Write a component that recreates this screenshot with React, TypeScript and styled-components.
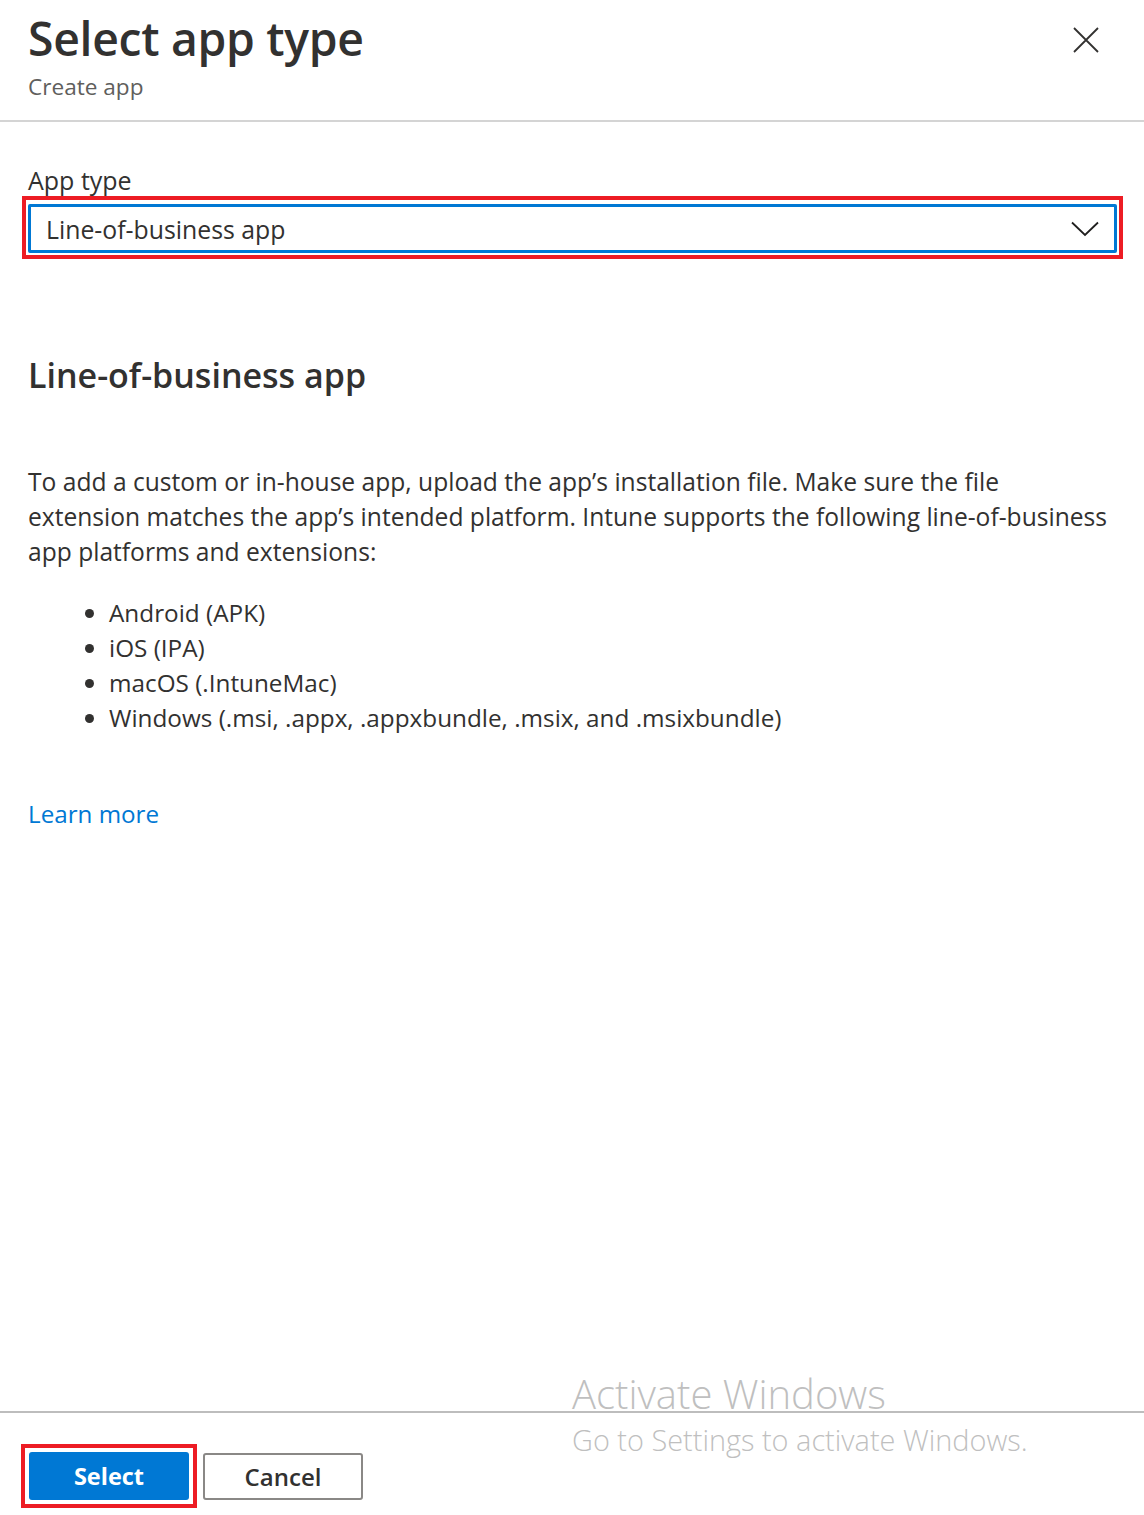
import React from "react";
import styled, { createGlobalStyle } from "styled-components";

const GlobalStyle = createGlobalStyle`
  html, body {
    margin: 0;
    padding: 0;
    background: #ffffff;
  }
  body {
    font-family: "Open Sans", "Noto Sans", Arial, sans-serif;
    color: #323130;
  }
`;

const platforms = [
  "Android (APK)",
  "iOS (IPA)",
  "macOS (.IntuneMac)",
  "Windows (.msi, .appx, .appxbundle, .msix, and .msixbundle)",
];

export default function App() {
  return (
    <>
      <GlobalStyle />
      <Panel>
        <Header>
          <TitleBlock>
            <Title>Select app type</Title>
            <Subtitle>Create app</Subtitle>
          </TitleBlock>
          <CloseButton aria-label="Close">
            <svg width="26" height="26" viewBox="0 0 26 26">
              <path d="M1 1 L25 25 M25 1 L1 25" stroke="#323130" strokeWidth="1.8" fill="none" />
            </svg>
          </CloseButton>
        </Header>

        <Body>
          <FieldLabel>App type</FieldLabel>
          <Highlight $wide>
            <Dropdown>
              <DropdownValue>Line-of-business app</DropdownValue>
              <svg width="28" height="16" viewBox="0 0 28 16">
                <path d="M1 1.5 L14 14 L27 1.5" stroke="#201f1e" strokeWidth="1.8" fill="none" />
              </svg>
            </Dropdown>
          </Highlight>

          <SectionTitle>Line-of-business app</SectionTitle>

          <Description>
            To add a custom or in-house app, upload the app’s installation file. Make sure the file
            <br />
            extension matches the app’s intended platform. Intune supports the following line-of-business
            <br />
            app platforms and extensions:
          </Description>

          <PlatformList>
            {platforms.map((p) => (
              <PlatformItem key={p}>{p}</PlatformItem>
            ))}
          </PlatformList>

          <LearnMore href="#">Learn more</LearnMore>
        </Body>

        <Footer>
          <Highlight>
            <PrimaryButton>Select</PrimaryButton>
          </Highlight>
          <SecondaryButton>Cancel</SecondaryButton>
          <Watermark>
            <WatermarkTitle>Activate Windows</WatermarkTitle>
            <WatermarkText>Go to Settings to activate Windows.</WatermarkText>
          </Watermark>
        </Footer>
      </Panel>
    </>
  );
}

const Panel = styled.div`
  min-height: 1515px;
  display: flex;
  flex-direction: column;
  box-sizing: border-box;
`;

const Header = styled.header`
  display: flex;
  justify-content: space-between;
  align-items: flex-start;
  padding: 9px 45px 17px 28px;
  border-bottom: 2px solid #d4d4d4;
`;

const TitleBlock = styled.div`
  display: flex;
  flex-direction: column;
`;

const Title = styled.h1`
  margin: 0;
  font-size: 46.3px;
  font-weight: 600;
  line-height: 60px;
  color: #323130;
  letter-spacing: -0.3px;
`;

const Subtitle = styled.div`
  font-size: 22.6px;
  line-height: 32px;
  color: #605e5c;
  margin-top: 2px;
`;

const CloseButton = styled.button`
  border: none;
  background: none;
  padding: 0;
  margin-top: 18px;
  width: 26px;
  height: 26px;
  cursor: pointer;
  display: flex;
`;

const Body = styled.main`
  flex: 1;
  display: flex;
  flex-direction: column;
  align-items: flex-start;
  padding: 43px 27px 0 28px;
`;

const FieldLabel = styled.label`
  font-size: 25px;
  line-height: 30px;
  color: #323130;
  margin-bottom: 1px;
`;

const Highlight = styled.div<{ $wide?: boolean }>`
  border: 4px solid #ed1c24;
  padding: ${(p) => (p.$wide ? "4px 2px 2px" : "4px")};
  margin: ${(p) => (p.$wide ? "0 -6px" : "0")};
  align-self: ${(p) => (p.$wide ? "stretch" : "auto")};
  display: flex;
`;

const Dropdown = styled.div`
  flex: 1;
  height: 43px;
  border: 3px solid #0078d4;
  border-radius: 2px;
  display: flex;
  align-items: center;
  justify-content: space-between;
  padding: 0 15px 0 15px;
`;

const DropdownValue = styled.span`
  font-size: 24.8px;
  color: #323130;
`;

const SectionTitle = styled.h2`
  margin: 93px 0 0;
  font-size: 34px;
  font-weight: 600;
  line-height: 46px;
  color: #323130;
`;

const Description = styled.p`
  margin: 66px 0 0;
  font-size: 24.6px;
  line-height: 35px;
  color: #323130;
  white-space: nowrap;
`;

const PlatformList = styled.ul`
  margin: 26px 0 0;
  padding: 0 0 0 81px;
  list-style: disc;
`;

const PlatformItem = styled.li`
  font-size: 24.3px;
  line-height: 35px;
  color: #323130;
`;

const LearnMore = styled.a`
  margin-top: 61px;
  font-size: 24.2px;
  line-height: 35px;
  color: #0078d4;
  text-decoration: none;
`;

const Footer = styled.footer`
  position: relative;
  display: flex;
  align-items: center;
  gap: 6px;
  border-top: 2px solid #bdbdbd;
  padding: 31px 21px 7px;
`;

const PrimaryButton = styled.button`
  width: 160px;
  height: 48px;
  border: none;
  border-radius: 3px;
  background: #0078d4;
  color: #ffffff;
  font-family: inherit;
  font-size: 23.5px;
  font-weight: 700;
  cursor: pointer;
`;

const SecondaryButton = styled.button`
  width: 160px;
  height: 47px;
  border: 2px solid #8a8886;
  border-radius: 3px;
  background: #ffffff;
  color: #323130;
  font-family: inherit;
  font-size: 24px;
  font-weight: 600;
  cursor: pointer;
`;

const Watermark = styled.div`
  position: absolute;
  left: 572px;
  top: -44px;
  display: flex;
  flex-direction: column;
  pointer-events: none;
`;

const WatermarkTitle = styled.div`
  font-size: 40px;
  font-weight: 300;
  line-height: 50px;
  color: #bfbfbf;
`;

const WatermarkText = styled.div`
  font-size: 28.9px;
  font-weight: 300;
  line-height: 40px;
  color: #bfbfbf;
  margin-top: 1px;
`;
